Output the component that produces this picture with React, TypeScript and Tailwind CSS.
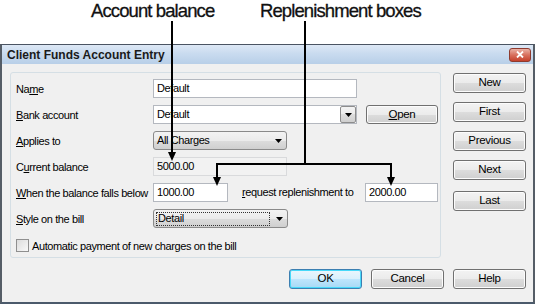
import React from "react";

const BTN =
  "flex items-center justify-center rounded-[3px] border border-[#707070] bg-[linear-gradient(to_bottom,#f3f3f3_0%,#ebebeb_50%,#dddddd_50%,#cfcfcf_100%)] text-[11.5px] tracking-[-0.3px] text-black shadow-[inset_0_0_0_1px_#fcfcfc]";

const TXT = "text-[11px] tracking-[-0.4px] whitespace-nowrap";

function Btn({ children, className = "" }: { children: React.ReactNode; className?: string }) {
  return <div className={`${BTN} ${className}`}>{children}</div>;
}

function Tri() {
  return (
    <svg width="7" height="4" viewBox="0 0 7 4">
      <path d="M0 0 H7 L3.5 4 Z" fill="#000" />
    </svg>
  );
}

function Label({ children }: { children: React.ReactNode }) {
  return <div className={`w-[137px] shrink-0 leading-[14px] text-black ${TXT}`}>{children}</div>;
}

export default function App() {
  return (
    <div className="relative w-[535px] h-[304px] overflow-hidden bg-white font-['Liberation_Sans',Arial,sans-serif] text-black">
      {/* callout labels */}
      <div className="flex h-[44px] items-start">
        <div className="ml-[91px] w-[169px] whitespace-nowrap text-[18.5px] leading-[22px] tracking-[-0.9px] text-[#111] [-webkit-text-stroke:0.3px_#111]">
          Account balance
        </div>
        <div className="whitespace-nowrap text-[18.5px] leading-[22px] tracking-[-0.9px] text-[#111] [-webkit-text-stroke:0.3px_#111]">
          Replenishment boxes
        </div>
      </div>

      {/* dialog */}
      <div className="flex h-[260px] flex-col border-x-2 border-b-2 border-t border-x-[#555d66] border-b-[#4b5a6b] border-t-[#4a5462] bg-[#f0f0f0]">
        <div className="flex h-[19px] items-center justify-between bg-[linear-gradient(to_bottom,#dde8f5_0%,#c9dbef_45%,#b8cfe8_100%)] pl-[5px] pr-[2px]">
          <div className="text-[12px] font-bold leading-[16px] text-[#1a1a1a]">Client Funds Account Entry</div>
          <div className="flex h-[14px] w-[22px] items-center justify-center rounded-[3px] border border-[#8e3b2f] bg-[linear-gradient(to_bottom,#eab2a6_0%,#d8705e_50%,#c5412c_100%)]">
            <svg width="8" height="7" viewBox="0 0 8 7">
              <path d="M1 0.5 L7 6.5 M7 0.5 L1 6.5" stroke="#fff" strokeWidth="1.8" />
            </svg>
          </div>
        </div>

        <div className="flex flex-col pl-[8px] pt-[8px]">
          <div className="flex">
            {/* group box */}
            <div className="flex h-[186px] w-[431px] flex-col gap-[7px] rounded-[3px] border border-[#d5dfe5] pl-[5px] pt-[6px]">
              <div className="flex h-[19px] items-center">
                <Label>
                  Na<span className="underline">m</span>e
                </Label>
                <div className={`flex h-[19px] w-[204px] items-center border border-[#b4b8bf] bg-white pl-[3px] ${TXT}`}>Default</div>
              </div>
              <div className="flex h-[19px] items-center">
                <Label>
                  <span className="underline">B</span>ank account
                </Label>
                <div className={`flex h-[19px] w-[204px] items-center justify-between border border-[#b4b8bf] bg-white pl-[3px] ${TXT}`}>
                  Default
                  <div className="flex h-[17px] w-[16px] items-center justify-center rounded-[2px] border border-[#8d8d8d] bg-[linear-gradient(to_bottom,#f3f3f3_0%,#ebebeb_50%,#dddddd_50%,#cfcfcf_100%)]">
                    <Tri />
                  </div>
                </div>
                <Btn className="ml-[9px] h-[19px] w-[72px]">
                  <span className="underline">O</span>pen
                </Btn>
              </div>
              <div className="flex h-[19px] items-center">
                <Label>
                  <span className="underline">A</span>pplies to
                </Label>
                <div className={`flex h-[19px] w-[134px] items-center justify-between rounded-[3px] border border-[#8a8a8a] bg-[linear-gradient(to_bottom,#f3f3f3_0%,#ebebeb_50%,#dddddd_50%,#cfcfcf_100%)] pl-[3px] pr-[4px] ${TXT}`}>
                  All Charges
                  <Tri />
                </div>
              </div>
              <div className="flex h-[19px] items-center">
                <Label>
                  C<span className="underline">u</span>rrent balance
                </Label>
                <div className={`flex h-[19px] w-[134px] items-center border border-[#d9dadc] bg-[#f2f2f2] pl-[3px] ${TXT}`}>5000.00</div>
              </div>
              <div className="flex h-[19px] items-center">
                <Label>
                  <span className="underline">W</span>hen the balance falls below
                </Label>
                <div className={`flex h-[19px] w-[75px] items-center border border-[#b4b8bf] bg-white pl-[3px] ${TXT}`}>1000.00</div>
                <div className={`ml-[14px] w-[123px] ${TXT}`}>
                  <span className="underline">r</span>equest replenishment to
                </div>
                <div className={`flex h-[19px] w-[73px] items-center border border-[#b4b8bf] bg-white pl-[3px] ${TXT}`}>2000.00</div>
              </div>
              <div className="flex h-[19px] items-center">
                <Label>
                  <span className="underline">S</span>tyle on the bill
                </Label>
                <div className={`flex h-[19px] w-[135px] items-center justify-between rounded-[3px] border border-[#8a8a8a] bg-[linear-gradient(to_bottom,#f3f3f3_0%,#ebebeb_50%,#dddddd_50%,#cfcfcf_100%)] pl-[2px] pr-[4px] ${TXT}`}>
                  <div className="flex h-[14px] w-[114px] items-center border border-dotted border-[#333] pl-[1px]">Detail</div>
                  <Tri />
                </div>
              </div>
              <div className="mt-[4px] flex h-[13px] items-center">
                <div className="h-[13px] w-[13px] border border-[#8f8f8f] bg-[linear-gradient(135deg,#dcdcdc,#f8f8f8)]" />
                <div className={`ml-[3px] leading-[14px] ${TXT}`}>Automatic payment of new charges on the bill</div>
              </div>
            </div>

            {/* right buttons */}
            <div className="ml-[12px] mt-[1px] flex flex-col gap-[9px]">
              <Btn className="h-[20px] w-[73px]">New</Btn>
              <Btn className="h-[20px] w-[73px]">First</Btn>
              <Btn className="h-[20px] w-[73px]">Previous</Btn>
              <Btn className="h-[20px] w-[73px]">Next</Btn>
              <Btn className="mt-[2px] h-[20px] w-[73px]">Last</Btn>
            </div>
          </div>

          <div className="mt-[11px] flex gap-[9px] pl-[279px]">
            <div className="flex h-[20px] w-[73px] items-center justify-center rounded-[3px] border border-[#3c7fb1] bg-[linear-gradient(to_bottom,#eaf6fd_0%,#d9f0fc_50%,#bee6fd_50%,#a7d9f5_100%)] text-[11.5px] tracking-[-0.3px] shadow-[inset_0_0_0_1px_#48d9f9]">
              OK
            </div>
            <Btn className="h-[20px] w-[73px]">Cancel</Btn>
            <Btn className="h-[20px] w-[73px]">Help</Btn>
          </div>
        </div>
      </div>

      {/* callout arrows */}
      <svg className="pointer-events-none absolute left-0 top-0" width="535" height="304" viewBox="0 0 535 304">
        <g stroke="#000" strokeWidth="2" fill="none">
          <path d="M172 21 V153" />
          <path d="M305 21 V163" />
          <path d="M217 164 H391" />
          <path d="M217 163 V178" />
          <path d="M391 163 V178" />
        </g>
        <g fill="#000">
          <path d="M168 152 H176 L172 161 Z" />
          <path d="M213 177 H221 L217 186 Z" />
          <path d="M387 177 H395 L391 186 Z" />
        </g>
      </svg>
    </div>
  );
}
